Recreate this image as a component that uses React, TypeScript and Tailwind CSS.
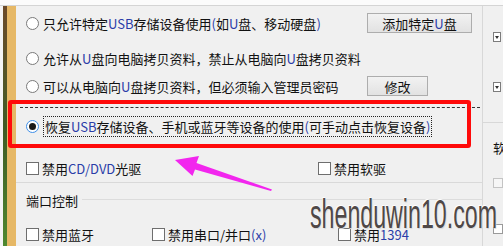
import React from "react";

const font = { fontFamily: '"Noto Sans CJK SC", "Noto Sans", sans-serif' };

const L = ({ children }: { children: React.ReactNode }) => (
  <span className="text-[#2a3ca8]">{children}</span>
);

const Radio = ({ checked }: { checked?: boolean }) => (
  <span
    className={`flex h-[13px] w-[13px] shrink-0 items-center justify-center rounded-full border bg-white ${
      checked ? "border-[#3d8ee8]" : "border-[#7a7a7a]"
    }`}
  >
    {checked && <span className="h-[7px] w-[7px] rounded-full bg-[#1a1a1a]" />}
  </span>
);

const Check = () => (
  <span className="h-[13px] w-[13px] shrink-0 border border-[#6e6e6e] bg-white" />
);

const Btn = ({ children, w }: { children: React.ReactNode; w: string }) => (
  <button
    className={`${w} flex h-[20px] items-center justify-center border border-[#adadad] bg-gradient-to-b from-[#f2f2f2] to-[#e2e2e2] text-[13px] leading-none text-[#111]`}
  >
    {children}
  </button>
);

const Drop = () => (
  <span className="flex h-[10px] w-[8px] items-center justify-center border border-[#7c7c7c] bg-white">
    <span className="h-0 w-0 border-x-[2px] border-t-[3px] border-x-transparent border-t-[#333]" />
  </span>
);

export default function App() {
  return (
    <div
      className="relative flex h-[246px] w-[503px] flex-col overflow-hidden bg-[#f0f0f0] text-[13px] leading-none text-[#111]"
      style={font}
    >
      <div className="h-[6px] shrink-0 border-b border-[#d4d4d4] bg-[#fbfbfb]" />
      <div className="flex flex-1">
        {/* left strip */}
        <div className="flex w-[16px] shrink-0">
          <div className="w-[3px] bg-[#f4f4f4]" />
          <div className="w-[4px] bg-gradient-to-b from-[#6b4a2a] via-[#3f5a25] to-[#4f8a30]" />
          <div className="w-[9px] bg-[#e6b866]" />
        </div>

        {/* main panel */}
        <div className="flex w-[467px] shrink-0 flex-col border-r border-[#d8d8d8]">
          <div className="flex h-[34px] items-center pl-[10px]">
            <label className="flex w-[341px] items-center gap-[4px]">
              <Radio />
              <span>
                只允许特定<L>USB</L>存储设备使用<L>(</L>如<L>U</L>盘、移动硬盘<L>)</L>
              </span>
            </label>
            <Btn w="w-[105px]">
              添加特定<L>U</L>盘
            </Btn>
          </div>
          <div className="flex h-[36px] items-center gap-[4px] pl-[10px]">
            <Radio />
            <span>
              允许从<L>U</L>盘向电脑拷贝资料，禁止从电脑向<L>U</L>盘拷贝资料
            </span>
          </div>
          <div className="flex h-[20px] items-center pl-[10px]">
            <label className="flex w-[341px] items-center gap-[4px]">
              <Radio />
              <span>
                可以从电脑向<L>U</L>盘拷贝资料，但必须输入管理员密码
              </span>
            </label>
            <Btn w="w-[61px]">修改</Btn>
          </div>

          <div className="mt-[11px] ml-[4px] mr-[2px] border-t border-dashed border-[#333]" />
          <div className="flex h-[36px] items-center gap-[4px] pl-[10px]">
            <Radio checked />
            <span className="border border-dotted border-[#222] px-[1px] py-[3px]">
              恢复<L>USB</L>存储设备、手机或蓝牙等设备的使用<L>(</L>可手动点击恢复设备<L>)</L>
            </span>
          </div>

          <div className="mt-[10px] flex h-[28px] items-center pl-[10px]">
            <label className="flex w-[292px] items-center gap-[3px]">
              <Check />
              <span>
                禁用<L>CD/DVD</L>光驱
              </span>
            </label>
            <label className="flex items-center gap-[3px]">
              <Check />
              <span>禁用软驱</span>
            </label>
          </div>
          <div className="border-t border-[#d9d9d9]" />

          <div className="flex h-[34px] items-center gap-[4px] pl-[10px]">
            <span>端口控制</span>
            <span className="mt-[-2px] h-[1px] flex-1 bg-[#dcdcdc]" />
          </div>
          <div className="flex h-[34px] items-center pl-[10px]">
            <label className="flex w-[126px] items-center gap-[3px]">
              <Check />
              <span>禁用蓝牙</span>
            </label>
            <label className="flex w-[186px] items-center gap-[3px]">
              <Check />
              <span>
                禁用串口/并口<L>(x)</L>
              </span>
            </label>
            <label className="flex items-center gap-[3px]">
              <Check />
              <span>
                禁用<L>1394</L>
              </span>
            </label>
          </div>
        </div>

        {/* right panel */}
        <div className="flex flex-1 flex-col pl-[10px]">
          <div className="mt-[26px]">
            <Drop />
          </div>
          <div className="mt-[40px]">
            <Drop />
          </div>
          <div className="-ml-[10px] mt-[30px] border-t border-[#d8d8d8]" />
          <div className="mt-[18px]">软</div>
          <div className="mt-[24px] h-[10px] w-[10px] border border-[#c4c4c4] bg-[#f6f6f6]" />
          <div className="mt-[36px] h-[10px] w-[10px] border border-[#9a9a9a] bg-white" />
        </div>
      </div>

      {/* red highlight */}
      <div className="absolute left-[8px] top-[100px] h-[48px] w-[463px] rounded-[3px] border-[4px] border-[#ff0a0a]" />

      {/* arrow */}
      <svg className="absolute left-0 top-0" width="503" height="246" viewBox="0 0 503 246">
        <polygon
          points="175,160 199,156 196.5,163 272,189.5 271,191 195,169.5 192.5,176"
          fill="#f226ee"
        />
      </svg>

      {/* watermark */}
      <div
        className="absolute left-[310px] top-[194px] origin-left scale-x-[0.58] whitespace-nowrap text-[40px] leading-none text-[#4f4847] [text-shadow:0_0_2px_#fff,1px_1px_1px_#d0d0d0,-1px_-1px_1px_#fff]"
        style={{ fontFamily: '"Liberation Sans", Arial, sans-serif' }}
      >
        shenduwin10.com
      </div>
    </div>
  );
}
